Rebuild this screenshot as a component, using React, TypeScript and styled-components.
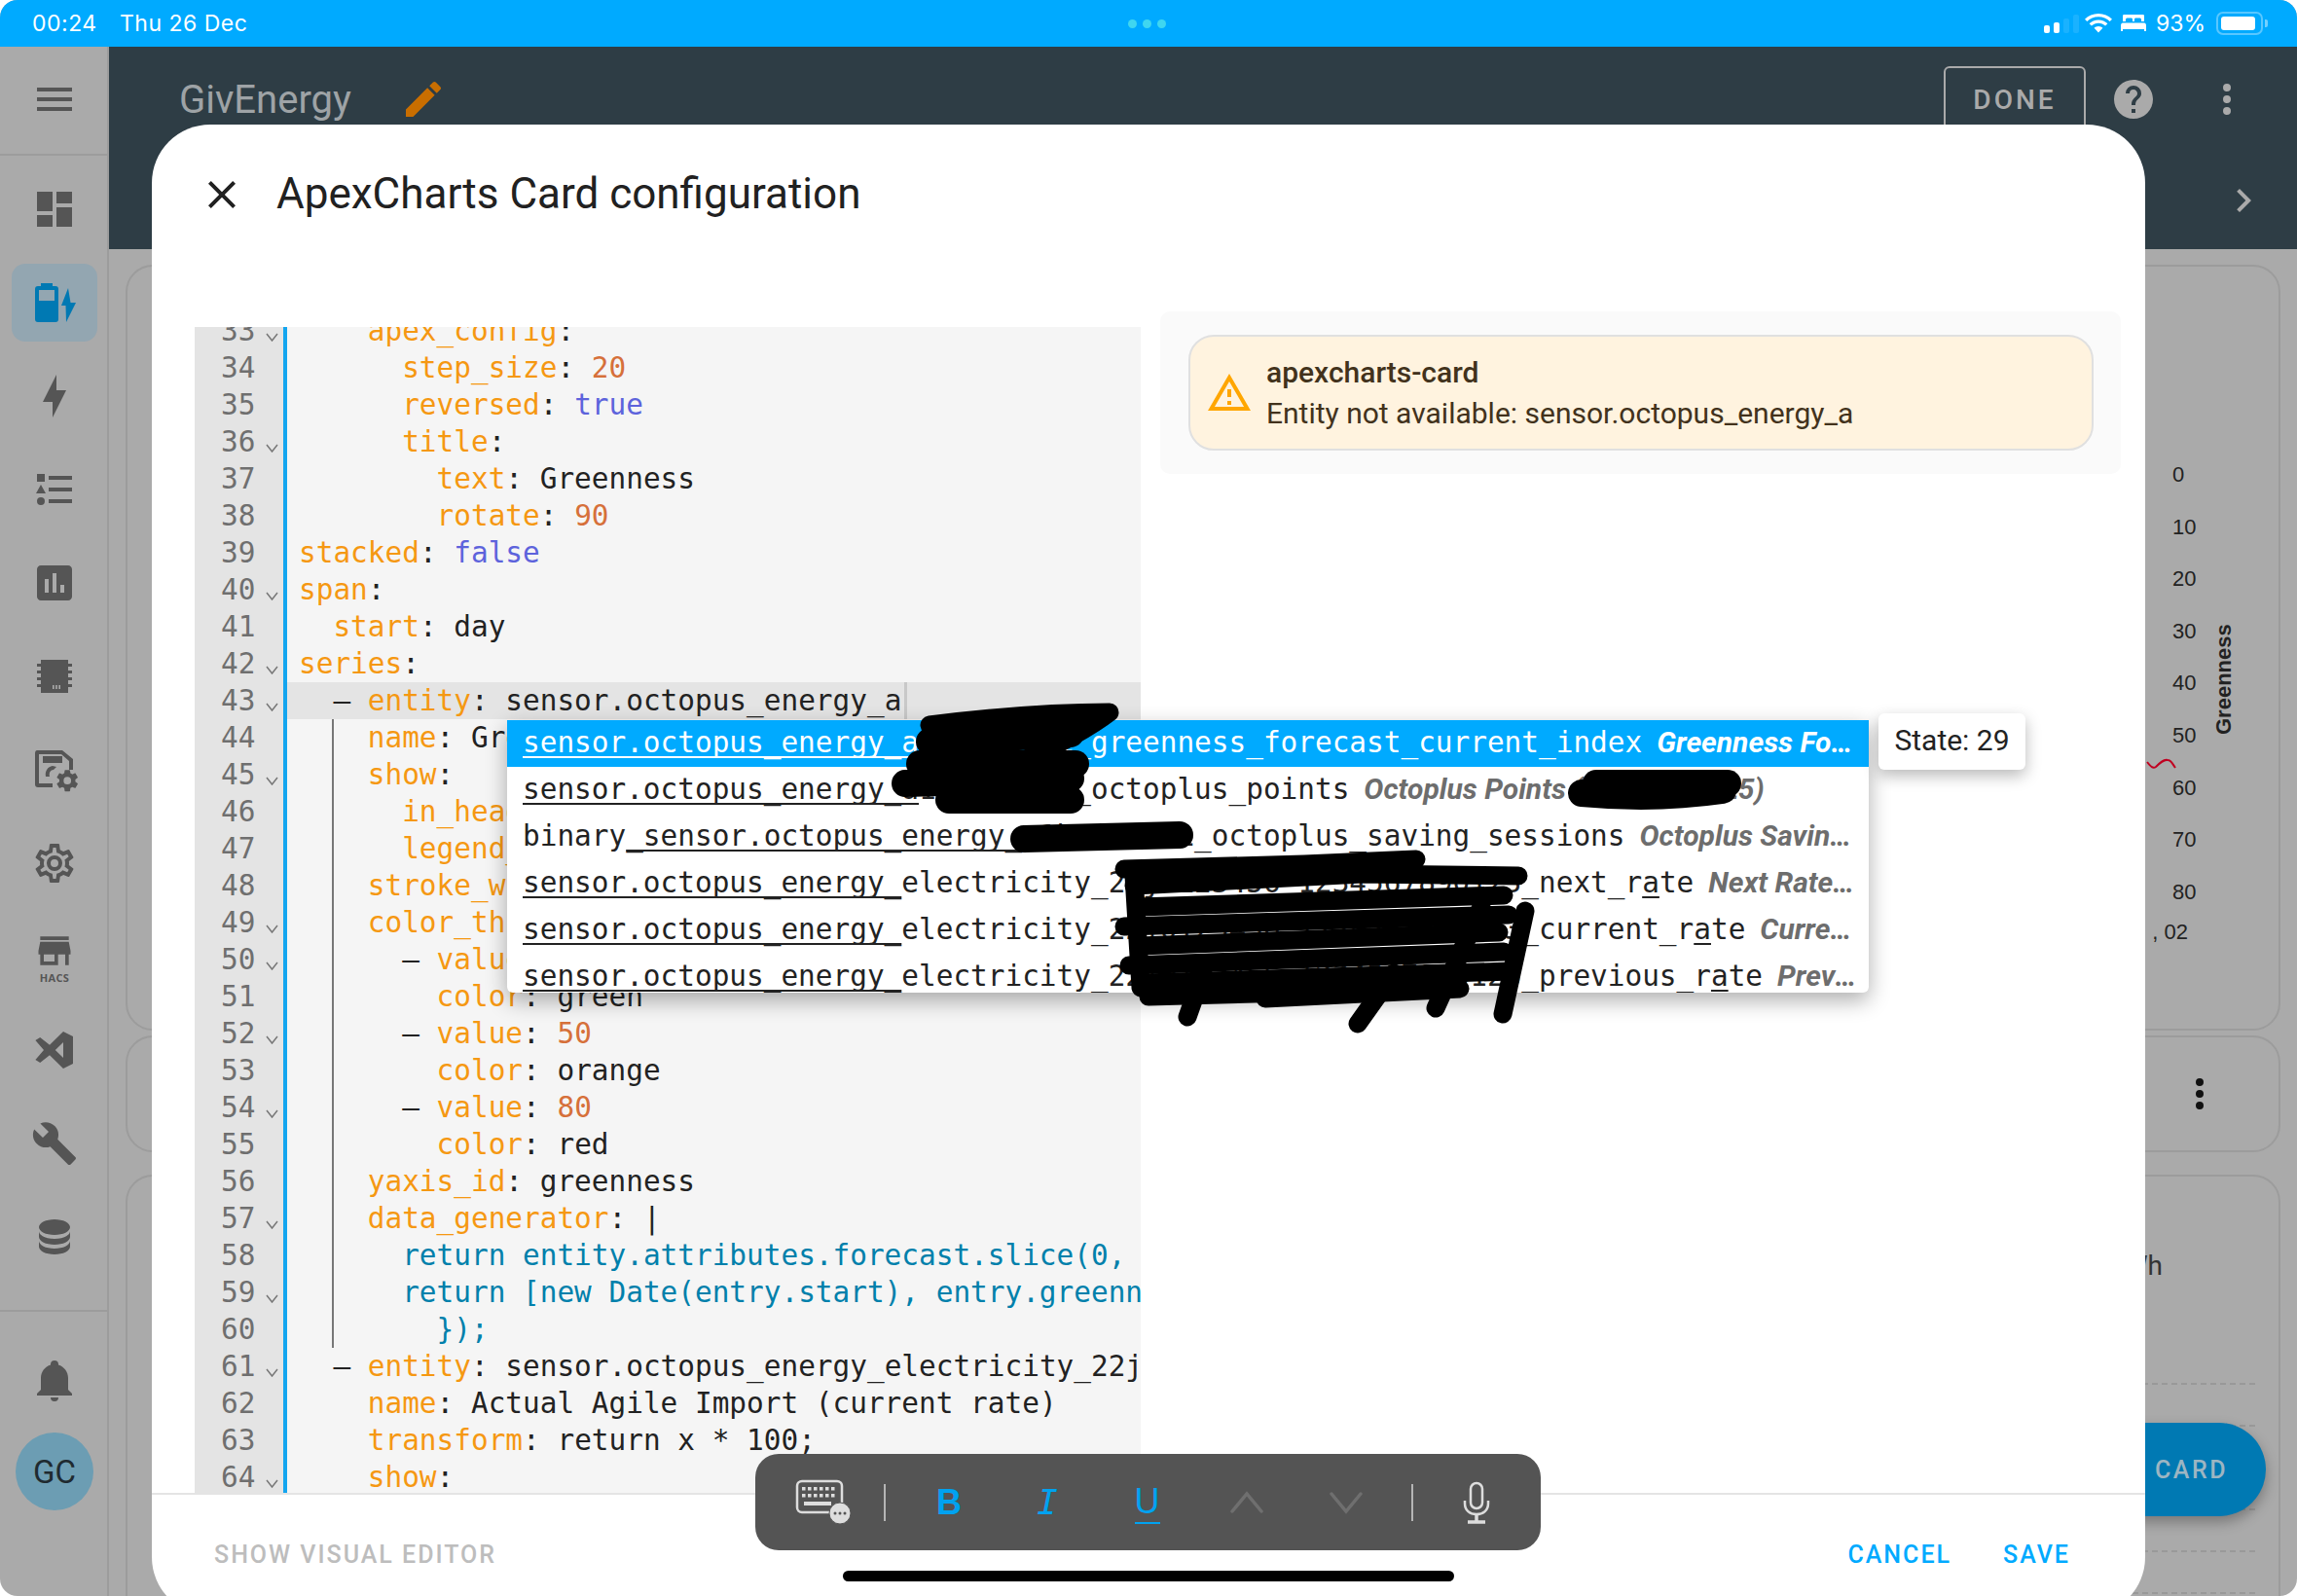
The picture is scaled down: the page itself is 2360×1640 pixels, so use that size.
import React from "react";
import styled, { createGlobalStyle } from "styled-components";

const GlobalStyle = createGlobalStyle`
  html, body {
    margin: 0;
    padding: 0;
    background: #fff;
  }
  * {
    box-sizing: border-box;
  }
`;

const MONO = `"DejaVu Sans Mono", "Liberation Mono", monospace`;
const SANS = `Roboto, "Liberation Sans", sans-serif`;

const Root = styled.div`
  position: relative;
  width: 2360px;
  height: 1640px;
  overflow: hidden;
  border-radius: 18px;
  background: #aaa;
  display: flex;
  flex-direction: column;
  font-family: ${SANS};
`;

/* ---------- status bar ---------- */

const StatusBar = styled.div`
  height: 48px;
  flex: none;
  background: #00aaff;
  color: #fff;
  display: flex;
  align-items: center;
  padding: 0 30px 0 33px;
  font-family: Inter, sans-serif;
  font-size: 23px;
`;

const StatusClock = styled.span`
  width: 90px;
  letter-spacing: 0.5px;
`;

const StatusDate = styled.span`
  letter-spacing: 0.5px;
`;

const StatusDots = styled.div`
  display: flex;
  gap: 6px;
  margin-left: 905px;
`;

const StatusDot = styled.span`
  width: 9px;
  height: 9px;
  border-radius: 50%;
  background: #3fd6f0;
`;

const StatusRight = styled.div`
  margin-left: auto;
  display: flex;
  align-items: center;
`;

const SignalBars = styled.div`
  display: flex;
  align-items: flex-end;
  gap: 4px;
  height: 20px;
  margin-right: 5px;
`;

const SignalBar = styled.span<{ $h: number; $off?: boolean }>`
  width: 6px;
  height: ${({ $h }) => $h}px;
  border-radius: 2px;
  background: ${({ $off }) => ($off ? "rgba(255,255,255,0.1)" : "#fff")};
`;

const BedSlot = styled.span`
  display: flex;
  margin-left: 8px;
`;

const StatusPercent = styled.span`
  margin: 0 11px 0 10px;
`;

const BatteryShell = styled.div`
  width: 48px;
  height: 24px;
  padding: 3px;
  border: 2px solid rgba(255, 255, 255, 0.35);
  border-radius: 7px;
`;

const BatteryFill = styled.div`
  width: 93%;
  height: 100%;
  background: #fff;
  border-radius: 3px;
`;

const BatteryCap = styled.span`
  width: 3px;
  height: 8px;
  margin-left: 2px;
  border-radius: 0 2px 2px 0;
  background: rgba(255, 255, 255, 0.45);
`;

/* ---------- page behind the dialog ---------- */

const Body = styled.div`
  flex: 1;
  min-height: 0;
  display: flex;
`;

const Sidebar = styled.nav`
  width: 112px;
  flex: none;
  border-right: 2px solid #9c9c9c;
  display: flex;
  flex-direction: column;
`;

const SidebarTop = styled.div`
  height: 112px;
  flex: none;
  border-bottom: 2px solid #9c9c9c;
  display: flex;
  align-items: center;
  justify-content: center;
  padding: 0 0 2px 2px;
`;

const NavList = styled.div`
  flex: none;
  height: 1188px;
  padding-top: 7px;
  border-bottom: 2px solid #9c9c9c;
  display: flex;
  flex-direction: column;
`;

const NavItem = styled.div<{ $active?: boolean }>`
  width: 88px;
  height: 80px;
  flex: none;
  margin: 8px 10px 8px 12px;
  border-radius: 14px;
  display: flex;
  flex-direction: column;
  align-items: center;
  justify-content: center;
  background: ${({ $active }) => ($active ? "#93a6b1" : "transparent")};
`;

const HacsLabel = styled.span`
  font-family: "Open Sans", sans-serif;
  font-weight: 700;
  font-size: 11px;
  line-height: 12px;
  letter-spacing: 0.3px;
  color: #555;
`;

const NavBottom = styled.div`
  display: flex;
  flex-direction: column;
  align-items: center;
  padding: 46px 0 0 2px;
`;

const Avatar = styled.div`
  width: 80px;
  height: 80px;
  margin-top: 30px;
  border-radius: 50%;
  background: #6c9db3;
  color: #1f2a30;
  font-size: 33px;
  display: flex;
  align-items: center;
  justify-content: center;
`;

const Main = styled.main`
  flex: 1;
  min-width: 0;
  display: flex;
  flex-direction: column;
`;

const Header = styled.header`
  height: 208px;
  flex: none;
  background: #2e3d45;
`;

const HeaderTop = styled.div`
  height: 108px;
  display: flex;
  align-items: center;
  padding: 0 48px 0 72px;
`;

const PageTitle = styled.h1`
  margin: 0;
  font-size: 40px;
  font-weight: 400;
  color: #9ea3a6;
`;

const TitleEdit = styled.span`
  display: flex;
  margin-left: 50px;
`;

const HeaderActions = styled.div`
  margin-left: auto;
  display: flex;
  align-items: center;
`;

const DoneButton = styled.div`
  width: 146px;
  height: 68px;
  border: 2px solid #aaa;
  border-radius: 6px;
  display: flex;
  align-items: center;
  justify-content: center;
  color: #aaa;
  font-size: 28px;
  font-weight: 500;
  letter-spacing: 3px;
  margin-right: 25px;
`;

const HeaderDots = styled.span`
  display: flex;
  margin-left: 48px;
`;

const HeaderTabs = styled.div`
  height: 100px;
  display: flex;
  align-items: center;
  justify-content: flex-end;
  padding-right: 31px;
`;

const Content = styled.div`
  flex: 1;
  min-height: 0;
  padding: 16px 17px 0;
  display: flex;
  flex-direction: column;
  overflow: hidden;
`;

const Card = styled.section<{ $mt?: number; $h?: number }>`
  flex: none;
  height: ${({ $h }) => ($h ? `${$h}px` : "auto")};
  margin-top: ${({ $mt }) => $mt ?? 0}px;
  border: 2px solid #9c9c9c;
  border-radius: 28px;
`;

const ChartCard = styled(Card)`
  display: flex;
  justify-content: flex-end;
  padding: 187px 42px 0 0;
`;

const Axis = styled.div`
  position: relative;
  width: 46px;
  font-family: "Liberation Sans", sans-serif;
  font-size: 22px;
  color: #222;
`;

const AxisTick = styled.div`
  height: 53.6px;
  line-height: 53.6px;
  padding-left: 23px;
`;

const AxisDate = styled.div`
  white-space: nowrap;
  line-height: 28px;
  margin-top: 1px;
  padding-right: 7px;
  text-align: right;
`;

const Squiggle = styled.svg`
  position: absolute;
  left: -4px;
  top: 316px;
`;

const AxisTitle = styled.div`
  writing-mode: vertical-rl;
  transform: rotate(180deg);
  margin: 182px 0 0 16px;
  font-family: "Liberation Sans", sans-serif;
  font-weight: 700;
  font-size: 22px;
  line-height: 28px;
  height: 112px;
  color: #222;
`;

const MenuCard = styled(Card)`
  display: flex;
  align-items: center;
  justify-content: flex-end;
  padding-right: 57px;
`;

const EnergyCard = styled(Card)`
  height: 500px;
  padding: 72px 24px 0 0;
`;

const EnergyValue = styled.div`
  text-align: right;
  padding-right: 95px;
  font-size: 28px;
  line-height: 40px;
  color: #333;
`;

const GridLines = styled.div`
  margin: 100px 0 0 100px;
`;

const GridLine = styled.div`
  height: 43px;
  border-top: 2px dashed #999;
`;

const Fab = styled.div`
  position: absolute;
  right: 32px;
  top: 1462px;
  width: 300px;
  height: 96px;
  border-radius: 48px;
  background: #0079b3;
  box-shadow: 0 6px 14px rgba(0, 0, 0, 0.3);
  color: #9db5c2;
  font-size: 25px;
  font-weight: 500;
  letter-spacing: 2.5px;
  display: flex;
  align-items: center;
  justify-content: flex-end;
  padding-right: 39px;
`;

/* ---------- dialog ---------- */

const Dialog = styled.div`
  position: absolute;
  left: 156px;
  top: 128px;
  width: 2048px;
  height: 1532px;
  background: #fff;
  border-radius: 60px;
  display: flex;
  flex-direction: column;
`;

const DialogHeader = styled.div`
  height: 192px;
  flex: none;
  display: flex;
  align-items: flex-start;
  padding: 48px 0 0 48px;
`;

const DialogTitle = styled.h2`
  margin: -1px 0 0 32px;
  font-size: 44px;
  line-height: 48px;
  font-weight: 400;
  color: #212121;
`;

const DialogContent = styled.div`
  flex: 1;
  min-height: 0;
  display: flex;
  align-items: flex-start;
  padding-left: 44px;
`;

const Editor = styled.div`
  width: 972px;
  height: 1198px;
  margin-top: 16px;
  overflow: hidden;
  background: #f5f5f5;
  font-family: ${MONO};
  font-size: 29.4px;
  color: #222;
`;

const CodeScroll = styled.div`
  margin-top: -15px;
`;

const CodeRow = styled.div`
  display: flex;
  height: 38px;
  line-height: 38px;
`;

const Gutter = styled.div`
  width: 91px;
  flex: none;
  background: #e4e4e4;
  display: flex;
  align-items: center;
  padding-left: 27px;
  color: #6f6f6f;
`;

const LineNumber = styled.span`
  width: 33px;
  white-space: nowrap;
`;

const FoldMark = styled.svg`
  margin: 12px 0 0 13px;
`;

const CodeCell = styled.div<{ $active?: boolean; $guide?: boolean }>`
  flex: 1;
  min-width: 0;
  border-left: 4px solid #14a5ef;
  padding-left: 12px;
  white-space: pre;
  overflow: hidden;
  background-color: ${({ $active }) => ($active ? "#e4e4e4" : "transparent")};
  background-image: ${({ $guide }) =>
    $guide ? "linear-gradient(#777, #777)" : "none"};
  background-repeat: no-repeat;
  background-position: 46px 0;
  background-size: 2px 100%;
`;

const tokenColors = {
  key: "#f59812",
  num: "#d6703a",
  atom: "#5d63dc",
  str: "#0080ab",
  text: "#222",
};

type TokenKind = keyof typeof tokenColors;

const Token = styled.span<{ $kind: TokenKind }>`
  color: ${({ $kind }) => tokenColors[$kind]};
`;

const Cursor = styled.span`
  display: inline-block;
  width: 3px;
  height: 38px;
  margin-left: 3px;
  vertical-align: top;
  background: #c8c8c8;
`;

const Preview = styled.div`
  width: 987px;
  height: 167px;
  margin-left: 20px;
  padding: 24px 28px 24px 29px;
  border-radius: 10px;
  background: #fafafa;
`;

const ErrorBox = styled.div`
  height: 119px;
  border: 2px solid #e0e0e0;
  border-radius: 26px;
  background: #fff3df;
  display: flex;
  align-items: center;
  padding-left: 16px;
  color: #42321c;
  font-size: 30px;
`;

const ErrorText = styled.div`
  margin-left: 14px;
  display: flex;
  flex-direction: column;
  gap: 10px;
`;

const ErrorTitle = styled.div`
  font-weight: 500;
  line-height: 32px;
`;

const ErrorBody = styled.div`
  line-height: 32px;
`;

const DialogFooter = styled.div`
  height: 126px;
  flex: none;
  border-top: 2px solid #e4e4e4;
  display: flex;
  align-items: center;
  padding: 0 77px 2px 64px;
  font-size: 25px;
  font-weight: 500;
  letter-spacing: 2px;
`;

const FooterAction = styled.span<{ $muted?: boolean; $gap?: number }>`
  color: ${({ $muted }) => ($muted ? "#bdbdbd" : "#00aaff")};
  margin-left: ${({ $gap }) => ($gap ? `${$gap}px` : 0)};
`;

const FooterSpacer = styled.span`
  flex: 1;
`;

/* ---------- autocomplete ---------- */

const HintList = styled.ul`
  position: absolute;
  left: 365px;
  top: 612px;
  width: 1399px;
  height: 280px;
  margin: 0;
  padding: 0;
  list-style: none;
  overflow: hidden;
  background: #fff;
  border-radius: 0 0 6px 6px;
  box-shadow: 0 8px 22px rgba(0, 0, 0, 0.32);
`;

const HintRow = styled.li<{ $selected?: boolean }>`
  height: 48px;
  flex: none;
  display: flex;
  align-items: center;
  padding: 0 10px 3px 16px;
  background: ${({ $selected }) => ($selected ? "#00aaff" : "transparent")};
  color: ${({ $selected }) => ($selected ? "#fff" : "#222")};
`;

const HintName = styled.span`
  flex: none;
  font-family: ${MONO};
  font-size: 29.4px;
  white-space: pre;
`;

const HintMatch = styled.span`
  text-decoration: underline;
  text-decoration-thickness: 2px;
  text-underline-offset: 4px;
  text-decoration-skip-ink: none;
`;

const HintLabel = styled.span<{ $selected?: boolean }>`
  flex: 1;
  min-width: 0;
  margin-left: 15px;
  font-size: 30px;
  font-weight: 700;
  font-style: italic;
  white-space: nowrap;
  overflow: hidden;
  text-overflow: ellipsis;
  color: ${({ $selected }) => ($selected ? "#fff" : "#6d6d6d")};
`;

const StateTip = styled.div`
  position: absolute;
  left: 1774px;
  top: 605px;
  width: 151px;
  height: 58px;
  border-radius: 6px;
  background: #fff;
  box-shadow: 0 6px 16px rgba(0, 0, 0, 0.28);
  display: flex;
  align-items: center;
  justify-content: center;
  padding-bottom: 3px;
  font-size: 30px;
  color: #222;
`;

const Scribble = styled.svg`
  position: absolute;
  left: 880px;
  top: 700px;
`;

/* ---------- iPad keyboard bar ---------- */

const KeyBar = styled.div`
  position: absolute;
  left: 776px;
  top: 1494px;
  width: 807px;
  height: 99px;
  border-radius: 24px;
  background: #545454;
  padding-left: 23px;
  display: grid;
  grid-template-columns: 94px 32px 100px 102px 103px 102px 102px 34px 98px;
  align-items: center;
  justify-items: center;
`;

const KeySeparator = styled.span`
  width: 2px;
  height: 38px;
  background: #b5b5b5;
`;

const FormatKey = styled.span<{ $italic?: boolean; $bold?: boolean; $under?: boolean }>`
  font-size: 36px;
  line-height: 42px;
  color: #00a2f0;
  font-weight: ${({ $bold }) => ($bold ? 700 : 400)};
  font-style: ${({ $italic }) => ($italic ? "italic" : "normal")};
  font-family: ${({ $italic }) => ($italic ? MONO : `"Liberation Sans", sans-serif`)};
  border-bottom: ${({ $under }) => ($under ? "2px solid #00a2f0" : "none")};
`;

const HomeIndicator = styled.div`
  position: absolute;
  left: 866px;
  top: 1614px;
  width: 628px;
  height: 11px;
  border-radius: 6px;
  background: #000;
`;

/* ---------- drawings ---------- */

const MDI = {
  menu: "M3,6H21V8H3V6M3,11H21V13H3V11M3,16H21V18H3V16Z",
  dashboard: "M13,3V9H21V3M13,21H21V11H13M3,21H11V15H3M3,13H11V3H3V13Z",
  bolt: "M11,15H6L13,1V9H18L11,23V15Z",
  list: "M5,9.5L7.5,14H2.5L5,9.5M3,4H7V8H3V4M5,20A2,2 0 0,0 7,18A2,2 0 0,0 5,16A2,2 0 0,0 3,18A2,2 0 0,0 5,20M9,5V7H21V5H9M9,19H21V17H9V19M9,13H21V11H9V13Z",
  chart: "M19 3H5C3.9 3 3 3.9 3 5V19C3 20.1 3.9 21 5 21H19C20.1 21 21 20.1 21 19V5C21 3.9 20.1 3 19 3M9 17H7V10H9V17M13 17H11V7H13V17M17 17H15V13H17V17Z",
  chip: "M5 3.5H19V5.5H21V7H19V9H21V10.5H19V12.5H21V14H19V16H21V17.5H19V20.5H5V17.5H3V16H5V14H3V12.5H5V10.5H3V9H5V7H3V5.5H5ZM11 16.5V18.5H11.8V16.5ZM12.6 16.5V18.5H13.4V16.5ZM14.2 16.5V18.5H15V16.5Z",
  cogOutline: "M12,8A4,4 0 0,1 16,12A4,4 0 0,1 12,16A4,4 0 0,1 8,12A4,4 0 0,1 12,8M12,10A2,2 0 0,0 10,12A2,2 0 0,0 12,14A2,2 0 0,0 14,12A2,2 0 0,0 12,10M10,22C9.75,22 9.54,21.82 9.5,21.58L9.13,18.93C8.5,18.68 7.96,18.34 7.44,17.94L4.95,18.95C4.73,19.03 4.46,18.95 4.34,18.73L2.34,15.27C2.21,15.05 2.27,14.78 2.46,14.63L4.57,12.97L4.5,12L4.57,11L2.46,9.37C2.27,9.22 2.21,8.95 2.34,8.73L4.34,5.27C4.46,5.05 4.73,4.96 4.95,5.05L7.44,6.05C7.96,5.66 8.5,5.32 9.13,5.07L9.5,2.42C9.54,2.18 9.75,2 10,2H14C14.25,2 14.46,2.18 14.5,2.42L14.87,5.07C15.5,5.32 16.04,5.66 16.56,6.05L19.05,5.05C19.27,4.96 19.54,5.05 19.66,5.27L21.66,8.73C21.79,8.95 21.73,9.22 21.54,9.37L19.43,11L19.5,12L19.43,13L21.54,14.63C21.73,14.78 21.79,15.05 21.66,15.27L19.66,18.73C19.54,18.95 19.27,19.04 19.05,18.95L16.56,17.95C16.04,18.34 15.5,18.68 14.87,18.93L14.5,21.58C14.46,21.82 14.25,22 14,22H10M11.25,4L10.88,6.61C9.68,6.86 8.62,7.5 7.85,8.39L5.44,7.35L4.69,8.65L6.8,10.2C6.4,11.37 6.4,12.64 6.8,13.8L4.68,15.36L5.43,16.66L7.86,15.62C8.63,16.5 9.68,17.14 10.87,17.38L11.24,20H12.76L13.13,17.39C14.32,17.14 15.37,16.5 16.14,15.62L18.57,16.66L19.32,15.36L17.2,13.81C17.6,12.64 17.6,11.37 17.2,10.2L19.31,8.65L18.56,7.35L16.15,8.39C15.38,7.5 14.32,6.86 13.12,6.62L12.75,4H11.25Z",
  cog: "M12,15.5A3.5,3.5 0 0,1 8.5,12A3.5,3.5 0 0,1 12,8.5A3.5,3.5 0 0,1 15.5,12A3.5,3.5 0 0,1 12,15.5M19.43,12.97C19.47,12.65 19.5,12.33 19.5,12C19.5,11.67 19.47,11.34 19.43,11L21.54,9.37C21.73,9.22 21.78,8.95 21.66,8.73L19.66,5.27C19.54,5.05 19.27,4.96 19.05,5.05L16.56,6.05C16.04,5.66 15.5,5.32 14.87,5.07L14.5,2.42C14.46,2.18 14.25,2 14,2H10C9.75,2 9.54,2.18 9.5,2.42L9.13,5.07C8.5,5.32 7.96,5.66 7.44,6.05L4.95,5.05C4.73,4.96 4.46,5.05 4.34,5.27L2.34,8.73C2.21,8.95 2.27,9.22 2.46,9.37L4.57,11C4.53,11.34 4.5,11.67 4.5,12C4.5,12.33 4.53,12.65 4.57,12.97L2.46,14.63C2.27,14.78 2.21,15.05 2.34,15.27L4.34,18.73C4.46,18.95 4.73,19.03 4.95,18.95L7.44,17.94C7.96,18.34 8.5,18.68 9.13,18.93L9.5,21.58C9.54,21.82 9.75,22 10,22H14C14.25,22 14.46,21.82 14.5,21.58L14.87,18.93C15.5,18.67 16.04,18.34 16.56,17.94L19.05,18.95C19.27,19.03 19.54,18.95 19.66,18.73L21.66,15.27C21.78,15.05 21.73,14.78 21.54,14.63L19.43,12.97Z",
  store: "M12,18H6V14H12M21,14V12L20,7H4L3,12V14H4V20H14V14H18V20H20V14M20,4H4V6H20V4Z",
  code: "M16.5 2.5L21.5 5V19L16.5 21.5L9.5 14.6L4.6 18.5L2.2 17L6.5 12L2.2 7L4.6 5.5L9.5 9.4ZM16.5 8L12.4 12L16.5 16Z",
  wrench: "M22.7,19L13.6,9.9C14.5,7.6 14,4.9 12.1,3C10.1,1 7.1,0.6 4.7,1.7L9,6L6,9L1.6,4.7C0.4,7.1 0.9,10.1 2.9,12.1C4.8,14 7.5,14.5 9.8,13.6L18.9,22.7C19.3,23.1 19.9,23.1 20.3,22.7L22.6,20.4C23.1,20 23.1,19.3 22.7,19Z",
  database: "M12,3C7.58,3 4,4.79 4,7C4,9.21 7.58,11 12,11C16.42,11 20,9.21 20,7C20,4.79 16.42,3 12,3M4,9V12C4,14.21 7.58,16 12,16C16.42,16 20,14.21 20,12V9C20,11.21 16.42,13 12,13C7.58,13 4,11.21 4,9M4,14V17C4,19.21 7.58,21 12,21C16.42,21 20,19.21 20,17V14C20,16.21 16.42,18 12,18C7.58,18 4,16.21 4,14Z",
  bell: "M21,19V20H3V19L5,17V11C5,7.9 7.03,5.17 10,4.29C10,4.19 10,4.1 10,4A2,2 0 0,1 12,2A2,2 0 0,1 14,4C14,4.1 14,4.19 14,4.29C16.97,5.17 19,7.9 19,11V17L21,19M14,21A2,2 0 0,1 12,23A2,2 0 0,1 10,21",
  pencil: "M20.71,7.04C21.1,6.65 21.1,6 20.71,5.63L18.37,3.29C18,2.9 17.35,2.9 16.96,3.29L15.12,5.12L18.87,8.87M3,17.25V21H6.75L17.81,9.93L14.06,6.18L3,17.25Z",
  help: "M15.07,11.25L14.17,12.17C13.45,12.89 13,13.5 13,15H11V14.5C11,13.39 11.45,12.39 12.17,11.67L13.41,10.41C13.78,10.05 14,9.55 14,9C14,7.89 13.1,7 12,7A2,2 0 0,0 10,9H8A4,4 0 0,1 12,5A4,4 0 0,1 16,9C16,9.88 15.64,10.67 15.07,11.25M13,19H11V17H13M12,2A10,10 0 0,0 2,12A10,10 0 0,0 12,22A10,10 0 0,0 22,12C22,6.47 17.5,2 12,2Z",
  dots: "M12,16A2,2 0 0,1 14,18A2,2 0 0,1 12,20A2,2 0 0,1 10,18A2,2 0 0,1 12,16M12,10A2,2 0 0,1 14,12A2,2 0 0,1 12,14A2,2 0 0,1 10,12A2,2 0 0,1 12,10M12,4A2,2 0 0,1 14,6A2,2 0 0,1 12,8A2,2 0 0,1 10,6A2,2 0 0,1 12,4Z",
  close: "M19,6.41L17.59,5L12,10.59L6.41,5L5,6.41L10.59,12L5,17.59L6.41,19L12,13.41L17.59,19L19,17.59L13.41,12L19,6.41Z",
  chevronRight: "M8.59,16.58L13.17,12L8.59,7.41L10,6L16,12L10,18L8.59,16.58Z",
  alert: "M12,2L1,21H23L12,2M12,6L19.53,19H4.47L12,6M11,10V14H13V10H11M11,16V18H13V16H11Z",
};

const Mdi: React.FC<{ d: string; size?: number; color?: string }> = ({
  d,
  size = 48,
  color = "#555",
}) => (
  <svg width={size} height={size} viewBox="0 0 24 24" fill={color} fillRule="evenodd">
    <path d={d} />
  </svg>
);

const BatteryCharging = () => (
  <svg width="48" height="48" viewBox="0 0 48 48">
    <path
      fill="#0079b3"
      d="M10 4H22V7H25C27 7 28 8 28 10V41C28 43 27 44 25 44H7C5 44 4 43 4 41V10C4 8 5 7 7 7H10Z"
    />
    <rect x="8" y="11" width="16" height="11" fill="#93a6b1" />
    <path fill="#0079b3" d="M38 9L31 27H35.500L36 44L46 24H40.500Z" />
  </svg>
);

const SaveCog = () => (
  <svg width="48" height="48" viewBox="0 0 48 48">
    <path
      fill="#555"
      fillRule="evenodd"
      d="M6 4H32L43 13V24H39V15L31 8H8V38H22V42H7C5 42 4 41 4 39V7C4 5 5 4 6 4ZM12 10H32V17H12ZM22 20C17 21 14 25 15 31H19C18 27 20 24 23 24L26 21Z"
    />
    <g transform="translate(24 22) scale(1.1)">
      <path fill="#555" d={MDI.cog} />
    </g>
  </svg>
);

const Wifi = () => (
  <svg width="30" height="24" viewBox="0 0 30 24" fill="#fff">
    <path d="M15 2C9.5 2 4.6 4.2 1 7.7L3.3 10C6.3 7.1 10.4 5.2 15 5.2S23.700 7.1 26.700 10L29 7.700C25.400 4.200 20.500 2 15 2Z" />
    <path d="M15 8.500C11.300 8.500 8 10 5.600 12.300L7.900 14.600C9.700 12.800 12.200 11.700 15 11.700S20.300 12.800 22.100 14.600L24.400 12.300C22 10 18.700 8.500 15 8.500Z" />
    <path d="M15 15C13.300 15 11.700 15.700 10.600 16.800L15 21.500L19.400 16.800C18.300 15.700 16.700 15 15 15Z" />
  </svg>
);

const Bed = () => (
  <svg width="26" height="20" viewBox="0 0 26 20" fill="#fff">
    <path d="M3 1H23C24 1 24 2 24 3V8H21V6C21 5 20 4.500 19 4.500H15.500C14.500 4.500 14 5 14 6V8H12V6C12 5 11.500 4.500 10.500 4.500H7C6 4.500 5 5 5 6V8H2V3C2 2 2 1 3 1Z" />
    <path d="M2 9.500H24C25 9.500 26 10.500 26 12V18H24V16H2V18H0V12C0 10.500 1 9.500 2 9.500Z" />
  </svg>
);

const KeyboardBadge = () => (
  <svg width="58" height="50" viewBox="0 0 58 50" fill="none">
    <rect x="2" y="3" width="46" height="32" rx="5" stroke="#ddd" strokeWidth="2.500" />
    <g fill="#ddd">
      {[7, 13, 19, 25, 31, 37].map((x) => (
        <React.Fragment key={x}>
          <rect x={x} y="9" width="3.500" height="3.500" />
          <rect x={x} y="16" width="3.500" height="3.500" />
        </React.Fragment>
      ))}
      <rect x="9" y="24" width="28" height="4" />
    </g>
    <circle cx="46" cy="36" r="11" fill="#ddd" stroke="#545454" strokeWidth="1" />
    <g fill="#545454">
      <circle cx="41" cy="36" r="1.500" />
      <circle cx="46" cy="36" r="1.500" />
      <circle cx="51" cy="36" r="1.500" />
    </g>
  </svg>
);

const Chevron: React.FC<{ up?: boolean }> = ({ up }) => (
  <svg width="34" height="24" viewBox="0 0 34 24" fill="none">
    <path
      d={up ? "M2 21L17 3L32 21" : "M2 3L17 21L32 3"}
      stroke="#6f6f6f"
      strokeWidth="3.500"
      strokeLinecap="round"
    />
  </svg>
);

const MicIcon = () => (
  <svg width="28" height="44" viewBox="0 0 28 44" fill="none" stroke="#ddd" strokeWidth="2.500">
    <rect x="8" y="2" width="12" height="26" rx="6" />
    <path d="M2 20V23C2 30 7 34 14 34C21 34 26 30 26 23V20" />
    <path d="M14 34V41M5 42H23" strokeWidth="3.500" />
  </svg>
);

// redaction marks: thick passes first, then the thinner scrawl on top
const SCRIBBLE_THICK = [
  "M955 762L1100 754",
  "M945 785L1105 785",
  "M930 805L1100 800",
  "M975 822L1100 822",
  "M1625 815Q1700 822 1770 812",
  "M1640 805L1775 805",
  "M1052 862L1212 858",
];

const SCRIBBLE_FINE = [
  "M955 745Q1060 732 1140 732Q1110 755 1050 782",
  "M1155 893L1340 888L1455 883",
  "M1165 910L1400 898L1560 900",
  "M1170 932L1545 920",
  "M1155 952L1550 940",
  "M1170 972L1540 958",
  "M1160 992L1545 978",
  "M1175 1010L1552 998",
  "M1180 1024L1400 1018",
  "M1300 1026L1500 1016",
  "M1220 1045L1236 1000",
  "M1395 1052L1432 1000",
  "M1475 1036L1522 932",
  "M1544 1042L1567 936",
  "M1165 900L1172 1015",
];

const RedactionScribble = () => (
  <Scribble width="920" height="380" viewBox="880 700 920 380" fill="none">
    <g stroke="#000" strokeLinecap="round" strokeLinejoin="round">
      {SCRIBBLE_THICK.map((d) => (
        <path key={d} d={d} strokeWidth="28" />
      ))}
      {SCRIBBLE_FINE.map((d) => (
        <path key={d} d={d} strokeWidth="19" />
      ))}
    </g>
  </Scribble>
);

/* ---------- data ---------- */

type Seg = [TokenKind, string];
type Line = { n: number; fold?: boolean; guide?: boolean; active?: boolean; segs: Seg[] };

const kv = (indent: number, key: string, kind: TokenKind, value: string): Seg[] => [
  ["text", " ".repeat(indent)],
  ["key", key],
  ["text", ": "],
  [kind, value],
];

const item = (indent: number, key: string, kind: TokenKind, value: string): Seg[] => [
  ["text", " ".repeat(indent) + "– "],
  ["key", key],
  ["text", ": "],
  [kind, value],
];

const str = (indent: number, value: string): Seg[] => [["str", " ".repeat(indent) + value]];

const LINES: Line[] = [
  { n: 33, fold: true, segs: kv(4, "apex_config", "text", "") },
  { n: 34, segs: kv(6, "step_size", "num", "20") },
  { n: 35, segs: kv(6, "reversed", "atom", "true") },
  { n: 36, fold: true, segs: kv(6, "title", "text", "") },
  { n: 37, segs: kv(8, "text", "text", "Greenness") },
  { n: 38, segs: kv(8, "rotate", "num", "90") },
  { n: 39, segs: kv(0, "stacked", "atom", "false") },
  { n: 40, fold: true, segs: kv(0, "span", "text", "") },
  { n: 41, segs: kv(2, "start", "text", "day") },
  { n: 42, fold: true, segs: kv(0, "series", "text", "") },
  { n: 43, fold: true, active: true, segs: item(2, "entity", "text", "sensor.octopus_energy_a") },
  { n: 44, guide: true, segs: kv(4, "name", "text", "Greenness Forecast") },
  { n: 45, fold: true, guide: true, segs: kv(4, "show", "text", "") },
  { n: 46, guide: true, segs: kv(6, "in_header", "atom", "false") },
  { n: 47, guide: true, segs: kv(6, "legend_value", "atom", "false") },
  { n: 48, guide: true, segs: kv(4, "stroke_width", "num", "2") },
  { n: 49, fold: true, guide: true, segs: kv(4, "color_threshold", "text", "") },
  { n: 50, fold: true, guide: true, segs: item(6, "value", "num", "0") },
  { n: 51, guide: true, segs: kv(8, "color", "text", "green") },
  { n: 52, fold: true, guide: true, segs: item(6, "value", "num", "50") },
  { n: 53, guide: true, segs: kv(8, "color", "text", "orange") },
  { n: 54, fold: true, guide: true, segs: item(6, "value", "num", "80") },
  { n: 55, guide: true, segs: kv(8, "color", "text", "red") },
  { n: 56, guide: true, segs: kv(4, "yaxis_id", "text", "greenness") },
  { n: 57, fold: true, guide: true, segs: kv(4, "data_generator", "text", "|") },
  { n: 58, guide: true, segs: str(6, "return entity.attributes.forecast.slice(0, 48).map((entry) => {") },
  { n: 59, fold: true, guide: true, segs: str(6, "return [new Date(entry.start), entry.greenness_index];") },
  { n: 60, guide: true, segs: str(8, "});") },
  { n: 61, fold: true, segs: item(2, "entity", "text", "sensor.octopus_energy_electricity_22j0123456") },
  { n: 62, segs: kv(4, "name", "text", "Actual Agile Import (current rate)") },
  { n: 63, segs: kv(4, "transform", "text", "return x * 100;") },
  { n: 64, fold: true, segs: kv(4, "show", "text", "") },
];

type Hint = { parts: [string, boolean][]; label: string };

const HINTS: Hint[] = [
  {
    parts: [
      ["sensor.octopus_energy_a", true],
      ["1b2c3d4e1_greenness_forecast_current_index", false],
    ],
    label: "Greenness Forecast Current Index",
  },
  {
    parts: [
      ["sensor.octopus_energy_a", true],
      ["1b2c3d4e1_octoplus_points", false],
    ],
    label: "Octoplus Points (A1B2C3D4E5)",
  },
  {
    parts: [
      ["binary", false],
      ["_sensor.octopus_energy_", true],
      ["a1b2c3d4e1_octoplus_saving_sessions", false],
    ],
    label: "Octoplus Saving Sessions",
  },
  {
    parts: [
      ["sensor.octopus_energy_", true],
      ["electricity_22j0123456_1234567890123_next_r", false],
      ["a", true],
      ["te", false],
    ],
    label: "Next Rate Electricity",
  },
  {
    parts: [
      ["sensor.octopus_energy_", true],
      ["electricity_22j0123456_1234567890123_current_r", false],
      ["a", true],
      ["te", false],
    ],
    label: "Current Rate Electricity",
  },
  {
    parts: [
      ["sensor.octopus_energy_", true],
      ["electricity_22j0123456_1234567890123_previous_r", false],
      ["a", true],
      ["te", false],
    ],
    label: "Previous Rate Electricity",
  },
];

const NAV_ICONS: (string | null)[] = [
  MDI.dashboard,
  null,
  MDI.bolt,
  MDI.list,
  MDI.chart,
  MDI.chip,
  "saveCog",
  MDI.cogOutline,
  "hacs",
  MDI.code,
  MDI.wrench,
  MDI.database,
];

const TICKS = [0, 10, 20, 30, 40, 50, 60, 70, 80];

/* ---------- app ---------- */

const App: React.FC = () => {
  return (
    <Root>
      <GlobalStyle />
      <StatusBar>
        <StatusClock>00:24</StatusClock>
        <StatusDate>Thu 26 Dec</StatusDate>
        <StatusDots>
          <StatusDot />
          <StatusDot />
          <StatusDot />
        </StatusDots>
        <StatusRight>
          <SignalBars>
            <SignalBar $h={8} />
            <SignalBar $h={11} />
            <SignalBar $h={15} $off />
            <SignalBar $h={19} $off />
          </SignalBars>
          <Wifi />
          <BedSlot>
            <Bed />
          </BedSlot>
          <StatusPercent>93%</StatusPercent>
          <BatteryShell>
            <BatteryFill />
          </BatteryShell>
          <BatteryCap />
        </StatusRight>
      </StatusBar>

      <Body>
        <Sidebar>
          <SidebarTop>
            <Mdi d={MDI.menu} />
          </SidebarTop>
          <NavList>
            {NAV_ICONS.map((icon, i) => {
              if (icon === null) {
                return (
                  <NavItem key={i} $active>
                    <BatteryCharging />
                  </NavItem>
                );
              }
              if (icon === "saveCog") {
                return (
                  <NavItem key={i}>
                    <SaveCog />
                  </NavItem>
                );
              }
              if (icon === "hacs") {
                return (
                  <NavItem key={i}>
                    <Mdi d={MDI.store} size={44} />
                    <HacsLabel>HACS</HacsLabel>
                  </NavItem>
                );
              }
              return (
                <NavItem key={i}>
                  <Mdi d={icon} />
                </NavItem>
              );
            })}
          </NavList>
          <NavBottom>
            <Mdi d={MDI.bell} />
            <Avatar>GC</Avatar>
          </NavBottom>
        </Sidebar>

        <Main>
          <Header>
            <HeaderTop>
              <PageTitle>GivEnergy</PageTitle>
              <TitleEdit>
                <Mdi d={MDI.pencil} color="#c96e00" />
              </TitleEdit>
              <HeaderActions>
                <DoneButton>DONE</DoneButton>
                <Mdi d={MDI.help} color="#aaa" />
                <HeaderDots>
                  <Mdi d={MDI.dots} color="#aaa" />
                </HeaderDots>
              </HeaderActions>
            </HeaderTop>
            <HeaderTabs>
              <Mdi d={MDI.chevronRight} color="#aaa" />
            </HeaderTabs>
          </Header>

          <Content>
            <ChartCard $h={787}>
              <Axis>
                {TICKS.map((t) => (
                  <AxisTick key={t}>{t}</AxisTick>
                ))}
                <AxisDate>, 02</AxisDate>
                <Squiggle width="34" height="16" viewBox="0 0 34 16" fill="none">
                  <path
                    d="M1 6C5 11 7 13 10 11C14 7 18 3 22 4C26 4 27 8 30 12"
                    stroke="#c00020"
                    strokeWidth="2"
                  />
                </Squiggle>
              </Axis>
              <AxisTitle>Greenness</AxisTitle>
            </ChartCard>
            <MenuCard $mt={5} $h={120}>
              <Mdi d={MDI.dots} color="#111" />
            </MenuCard>
            <EnergyCard $mt={23}>
              <EnergyValue>kWh</EnergyValue>
              <GridLines>
                {[0, 1, 2, 3, 4, 5].map((i) => (
                  <GridLine key={i} />
                ))}
              </GridLines>
            </EnergyCard>
          </Content>
        </Main>
      </Body>

      <Fab>ADD CARD</Fab>

      <Dialog>
        <DialogHeader>
          <Mdi d={MDI.close} color="#212121" />
          <DialogTitle>ApexCharts Card configuration</DialogTitle>
        </DialogHeader>
        <DialogContent>
          <Editor>
            <CodeScroll>
              {LINES.map((line) => (
                <CodeRow key={line.n}>
                  <Gutter>
                    <LineNumber>{line.n}</LineNumber>
                    {line.fold && (
                      <FoldMark width="13" height="9" viewBox="0 0 13 9" fill="none">
                        <path d="M1 1L6.500 8L12 1" stroke="#777" strokeWidth="1.500" />
                      </FoldMark>
                    )}
                  </Gutter>
                  <CodeCell $active={line.active} $guide={line.guide}>
                    {line.segs.map(([kind, text], i) => (
                      <Token key={i} $kind={kind}>
                        {text}
                      </Token>
                    ))}
                    {line.active && <Cursor />}
                  </CodeCell>
                </CodeRow>
              ))}
            </CodeScroll>
          </Editor>
          <Preview>
            <ErrorBox>
              <Mdi d={MDI.alert} color="#ffa600" />
              <ErrorText>
                <ErrorTitle>apexcharts-card</ErrorTitle>
                <ErrorBody>Entity not available: sensor.octopus_energy_a</ErrorBody>
              </ErrorText>
            </ErrorBox>
          </Preview>
        </DialogContent>
        <DialogFooter>
          <FooterAction $muted>SHOW VISUAL EDITOR</FooterAction>
          <FooterSpacer />
          <FooterAction>CANCEL</FooterAction>
          <FooterAction $gap={53}>SAVE</FooterAction>
        </DialogFooter>

        <HintList>
          {HINTS.map((hint, i) => (
            <HintRow key={i} $selected={i === 0}>
              <HintName>
                {hint.parts.map(([text, match], j) =>
                  match ? <HintMatch key={j}>{text}</HintMatch> : <span key={j}>{text}</span>
                )}
              </HintName>
              <HintLabel $selected={i === 0}>{hint.label}</HintLabel>
            </HintRow>
          ))}
        </HintList>
        <StateTip>State: 29</StateTip>
      </Dialog>

      <RedactionScribble />

      <KeyBar>
        <KeyboardBadge />
        <KeySeparator />
        <FormatKey $bold>B</FormatKey>
        <FormatKey $italic>I</FormatKey>
        <FormatKey $under>U</FormatKey>
        <Chevron up />
        <Chevron />
        <KeySeparator />
        <MicIcon />
      </KeyBar>
      <HomeIndicator />
    </Root>
  );
};

export default App;
